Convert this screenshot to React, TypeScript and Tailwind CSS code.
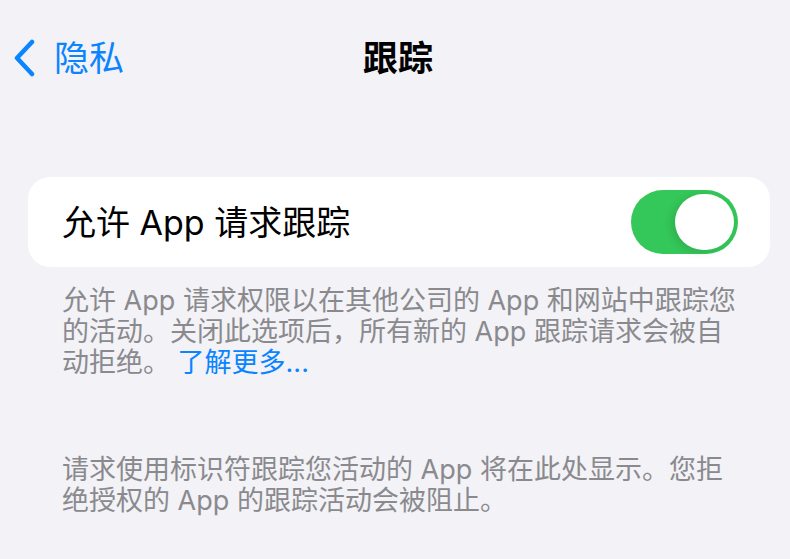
import { useState } from 'react';

const FONT = 'font-["Inter","Noto_Sans_CJK_SC",sans-serif]';

function Toggle({ on, onChange }: { on: boolean; onChange: () => void }) {
  return (
    <button
      onClick={onChange}
      className={`flex h-[64px] w-[107px] shrink-0 items-center rounded-full p-[4px] ${
        on ? 'justify-end bg-[#34c759]' : 'justify-start bg-[#e5e5ea]'
      }`}
    >
      <span className="h-[56px] w-[59px] rounded-full bg-white shadow-[-3px_2px_8px_rgba(0,0,0,0.12)]" />
    </button>
  );
}

export default function App() {
  const [allow, setAllow] = useState(true);

  return (
    <div className={`min-h-[559px] w-full bg-[#f2f2f7] ${FONT}`}>
      {/* nav bar */}
      <div className="flex h-[116px] items-start pt-[37px]">
        <div className="flex flex-1 items-center">
          <div className="flex items-center gap-[18px] pl-[12px] text-[#0a84ff]">
            <svg width="24" height="38" viewBox="0 0 24 38" fill="none">
              <path
                d="M20 3 L5 19 L20 35"
                stroke="#0a84ff"
                strokeWidth="4.5"
                strokeLinecap="round"
                strokeLinejoin="round"
              />
            </svg>
            <span className="text-[35px] leading-[42px]">隐私</span>
          </div>
        </div>
        <div className="pl-[6px] text-[35px] font-bold leading-[42px] text-black">跟踪</div>
        <div className="flex-1" />
      </div>

      <div className="pl-[28px] pr-[20px] pt-[61px]">
        {/* toggle cell */}
        <div className="flex h-[90px] items-center justify-between rounded-[22px] bg-white pl-[34px] pr-[32px]">
          <span className="text-[34px] text-black">允许 App 请求跟踪</span>
          <Toggle on={allow} onChange={() => setAllow(!allow)} />
        </div>

        <p className="pl-[34px] pr-[28px] pt-[18px] text-[27px] leading-[31px] text-[#8a8a8e]">
          允许 App 请求权限以在其他公司的 App 和网站中跟踪您的活动。关闭此选项后，所有新的 App 跟踪请求会被自动拒绝。{' '}
          <a className="inline-block leading-[31px] text-[#0a84ff]">了解更多...</a>
        </p>

        <p className="pl-[34px] pr-[28px] pt-[76px] text-[27px] leading-[31px] text-[#8a8a8e]">
          请求使用标识符跟踪您活动的 App 将在此处显示。您拒绝授权的 App 的跟踪活动会被阻止。
        </p>
      </div>
    </div>
  );
}
